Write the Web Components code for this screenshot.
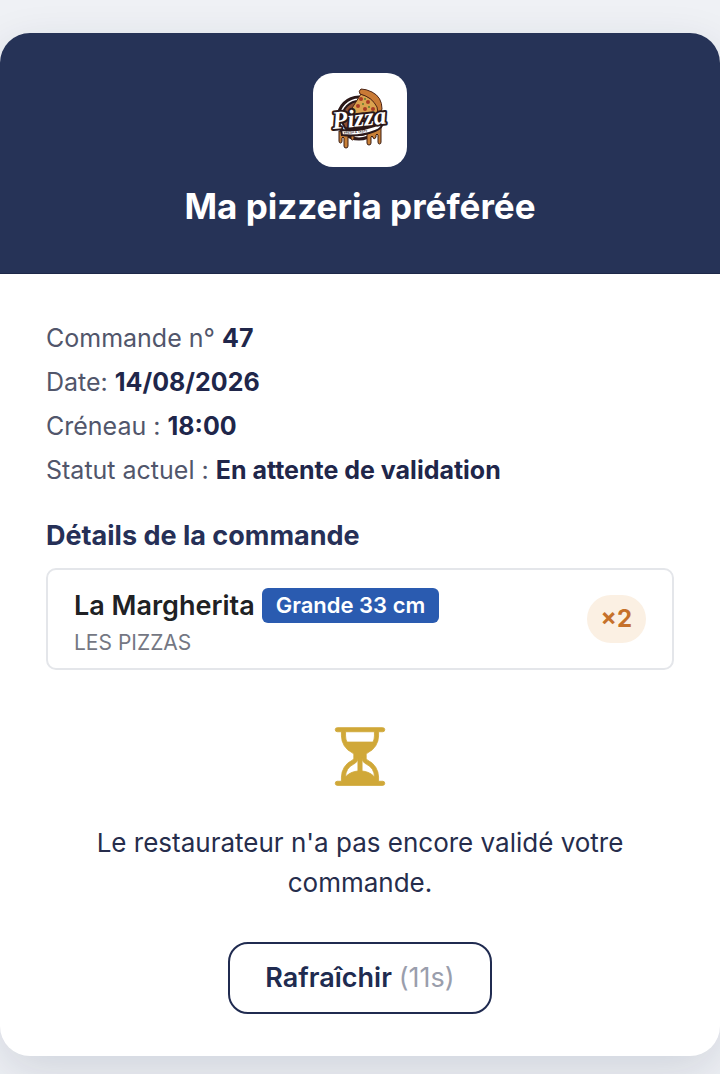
<!DOCTYPE html>
<html lang="fr">
<head>
<meta charset="utf-8">
<meta name="viewport" content="width=device-width, initial-scale=1">
<title>Ma pizzeria préférée</title>
<style>
body {
  margin: 0;
  padding: 33px 0 18px;
  background: #eff1f5;
  color: #262d4c;
  font-family: Inter, "Liberation Sans", sans-serif;
  font-size: 25px;
}
</style>
</head>
<body>
<order-card>
  <shop-header slot="header" name="Ma pizzeria préférée"></shop-header>
  <info-row label="Commande n°">47</info-row>
  <info-row label="Date:">14/08/2026</info-row>
  <info-row label="Créneau :">18:00</info-row>
  <info-row label="Statut actuel :">En attente de validation</info-row>
  <order-details heading="Détails de la commande">
    <order-item name="La Margherita" size="Grande 33 cm" category="LES PIZZAS" qty="2"></order-item>
  </order-details>
  <order-status>Le restaurateur n'a pas encore validé votre commande.</order-status>
  <refresh-button seconds="11">Rafraîchir</refresh-button>
</order-card>

<script>
// clone a template string into an open shadow root
function render(el, html) {
  const template = document.createElement("template");
  template.innerHTML = html;
  el.attachShadow({ mode: "open" }).appendChild(template.content.cloneNode(true));
}

// white card that holds the whole order
class OrderCard extends HTMLElement {
  constructor() {
    super();
    render(this, `
<style>
:host {
  display: block;
  overflow: hidden;
  border-radius: 30px;
  background: #fff;
  box-shadow: 0 16px 48px rgba(30, 41, 80, 0.14);
}
.body {
  display: flex;
  flex-direction: column;
  padding: 42px 46px;
}
</style>
<slot name="header"></slot>
<main class="body"><slot></slot></main>
`);
  }
}
customElements.define("order-card", OrderCard);

// round pizza badge with the slice on top and cheese dripping below
class PizzaLogo extends HTMLElement {
  constructor() {
    super();
    render(this, `
<style>
:host {
  display: flex;
  align-items: center;
  justify-content: center;
  width: 94px;
  height: 94px;
  border-radius: 20px;
  background: #fff;
}
svg { display: block; }
text { font-family: "Liberation Serif", serif; font-weight: bold; font-style: italic; }
.tag { font-family: "Liberation Sans", sans-serif; font-style: normal; }
</style>
<svg width="70" height="70" viewBox="0 0 70 70" role="img" aria-label="Pizza">
  <circle cx="34" cy="33" r="21" fill="#fff" stroke="#2b1818" stroke-width="3"/>
  <circle cx="34" cy="33" r="17" fill="#8d5034" stroke="#2b1818" stroke-width="2"/>
  <path d="M21 42h26q-3 8-13 8t-13-8z" fill="#2b1818"/>
  <path d="M14 46v10q0 2 1.500 2t1.500-2v-3q1-2 2 0v8q0 2 2 2t2-2v-13h3v5q0 2 1.500 2t1.500-2v-8zM42 44v14q0 2 2 2t2-2v-6q1-2 2 0v1q2 2 3-1v-2q1-2 2 0v7q0 2 1.500 2t1.500-2V38z" fill="#c98037" stroke="#3b1d12"/>
  <path d="M36 9L22 31l31-2 1-6q-5-10-18-14z" fill="#dba24e" stroke="#4b2415"/>
  <path d="M36 4q-3 2-1 5 12 3 17 13l1 6q3 0 4-4 0-12-10-17-6-3-11-3z" fill="#c97a35" stroke="#4b2415"/>
  <g fill="#a93b24"><circle cx="36" cy="14" r="2"/><circle cx="43" cy="17" r="2"/><circle cx="33" cy="21" r="2"/><circle cx="48" cy="24" r="2"/><circle cx="40" cy="24" r="2"/></g>
  <g fill="#5f7b2c"><circle cx="40" cy="14" r="1"/><circle cx="38" cy="19" r="1"/><circle cx="44" cy="22" r="1"/><circle cx="29" cy="25" r="1"/></g>
  <path d="M16 45q21 2 41-7 1 5-7 8-15 6-33 4z" fill="#fff" stroke="#2b1818" stroke-width="2"/>
  <text transform="rotate(-6 8 44)" x="8" y="44" font-size="25" fill="#fff" stroke="#2b1818" stroke-width="4" stroke-linejoin="round" paint-order="stroke">Pizza</text>
  <text class="tag" transform="rotate(-5 19 49)" x="19" y="49" font-size="3" fill="#2b1818">FRESH &amp; TASTY</text>
</svg>
`);
  }
}
customElements.define("pizza-logo", PizzaLogo);

class ShopHeader extends HTMLElement {
  constructor() {
    super();
    render(this, `
<style>
:host { display: block; }
header {
  display: flex;
  flex-direction: column;
  align-items: center;
  gap: 16px;
  padding: 40px 46px 43px;
  background: #263357;
  border-bottom: 1px solid #1d2848;
  color: #fff;
}
h1 {
  margin: 0;
  font-size: 35px;
  line-height: 47px;
  font-weight: 700;
  text-align: center;
}
</style>
<header>
  <pizza-logo></pizza-logo>
  <h1></h1>
</header>
`);
  }
  connectedCallback() {
    this.shadowRoot.querySelector("h1").textContent = this.getAttribute("name");
  }
}
customElements.define("shop-header", ShopHeader);

// one "label value" line
class InfoRow extends HTMLElement {
  constructor() {
    super();
    render(this, `
<style>
:host {
  display: block;
  line-height: 44px;
  color: #51566b;
}
strong { font-weight: 700; color: #20264a; }
</style>
<span></span> <strong><slot></slot></strong>
`);
  }
  connectedCallback() {
    this.shadowRoot.querySelector("span").textContent = this.getAttribute("label");
  }
}
customElements.define("info-row", InfoRow);

class OrderDetails extends HTMLElement {
  constructor() {
    super();
    render(this, `
<style>
:host { display: block; margin-top: 26px; }
h2 {
  margin: 0 0 14px;
  font-size: 27px;
  line-height: 36px;
  font-weight: 700;
  color: #263057;
}
</style>
<h2></h2>
<slot></slot>
`);
  }
  connectedCallback() {
    this.shadowRoot.querySelector("h2").textContent = this.getAttribute("heading");
  }
}
customElements.define("order-details", OrderDetails);

class OrderItem extends HTMLElement {
  constructor() {
    super();
    render(this, `
<style>
:host {
  display: flex;
  align-items: center;
  justify-content: space-between;
  gap: 16px;
  padding: 18px 26px 9px;
  border: 2px solid #e4e6ea;
  border-radius: 10px;
  color: #202124;
}
.line {
  display: flex;
  flex-wrap: wrap;
  align-items: center;
  gap: 7px;
}
.name { font-size: 27px; line-height: 35px; font-weight: 600; }
.size {
  padding: 0 14px;
  border-radius: 6px;
  background: #2a5bb0;
  color: #fff;
  font-size: 22px;
  line-height: 35px;
  font-weight: 600;
}
.category {
  margin-top: 4px;
  font-size: 21px;
  line-height: 32px;
  color: #747783;
}
.qty {
  padding: 0 14px;
  margin-bottom: 9px;
  border-radius: 24px;
  background: #fbf0e3;
  color: #c6712a;
  font-size: 24px;
  line-height: 48px;
  font-weight: 700;
}
</style>
<div>
  <div class="line"><span class="name"></span><span class="size"></span></div>
  <div class="category"></div>
</div>
<span class="qty"></span>
`);
  }
  connectedCallback() {
    const root = this.shadowRoot;
    root.querySelector(".name").textContent = this.getAttribute("name");
    root.querySelector(".size").textContent = this.getAttribute("size");
    root.querySelector(".category").textContent = this.getAttribute("category");
    root.querySelector(".qty").textContent = "×" + this.getAttribute("qty");
  }
}
customElements.define("order-item", OrderItem);

// hourglass and the waiting message
class OrderStatus extends HTMLElement {
  constructor() {
    super();
    render(this, `
<style>
:host {
  display: flex;
  flex-direction: column;
  align-items: center;
  gap: 33px;
  margin-top: 53px;
}
svg { display: block; fill: #d0a838; stroke: #d0a838; stroke-width: 0.2; }
p {
  margin: 0;
  font-size: 26px;
  line-height: 40px;
  text-align: center;
}
</style>
<svg width="66" height="67" viewBox="0 0 16 16" aria-hidden="true">
  <path d="M2.500 15a.5.5 0 1 1 0-1h1v-1a4.500 4.500 0 0 1 2.557-4.060c.29-.139.443-.377.443-.59v-.7c0-.213-.154-.451-.443-.59A4.500 4.500 0 0 1 3.500 3V2h-1a.5.5 0 0 1 0-1h11a.5.5 0 0 1 0 1h-1v1a4.500 4.500 0 0 1-2.557 4.060c-.29.139-.443.377-.443.59v.7c0 .213.154.451.443.59A4.500 4.500 0 0 1 12.500 13v1h1a.5.5 0 0 1 0 1zm2-13v1c0 .537.12 1.045.337 1.500h6.326c.216-.455.337-.963.337-1.500V2zm3 6.350c0 .701-.478 1.236-1.011 1.492A3.500 3.500 0 0 0 4.500 13s.866-1.299 3-1.480zm1 0v3.170c2.134.181 3 1.480 3 1.480a3.500 3.500 0 0 0-1.989-3.158C8.978 9.586 8.500 9.052 8.500 8.351z"/>
</svg>
<p><slot></slot></p>
`);
  }
}
customElements.define("order-status", OrderStatus);

class RefreshButton extends HTMLElement {
  constructor() {
    super();
    render(this, `
<style>
:host { display: flex; justify-content: center; margin-top: 39px; }
button {
  padding: 0 35px;
  border: 2px solid #202b50;
  border-radius: 20px;
  background: #fff;
  color: #202b50;
  font: inherit;
  font-size: 27px;
  line-height: 68px;
  font-weight: 600;
  cursor: pointer;
}
span { color: #9a9eac; font-weight: 400; }
</style>
<button type="button"><slot></slot> <span></span></button>
`);
  }
  connectedCallback() {
    this.shadowRoot.querySelector("span").textContent = "(" + this.getAttribute("seconds") + "s)";
    this.shadowRoot.querySelector("button").onclick = () => location.reload();
  }
}
customElements.define("refresh-button", RefreshButton);
</script>
</body>
</html>
